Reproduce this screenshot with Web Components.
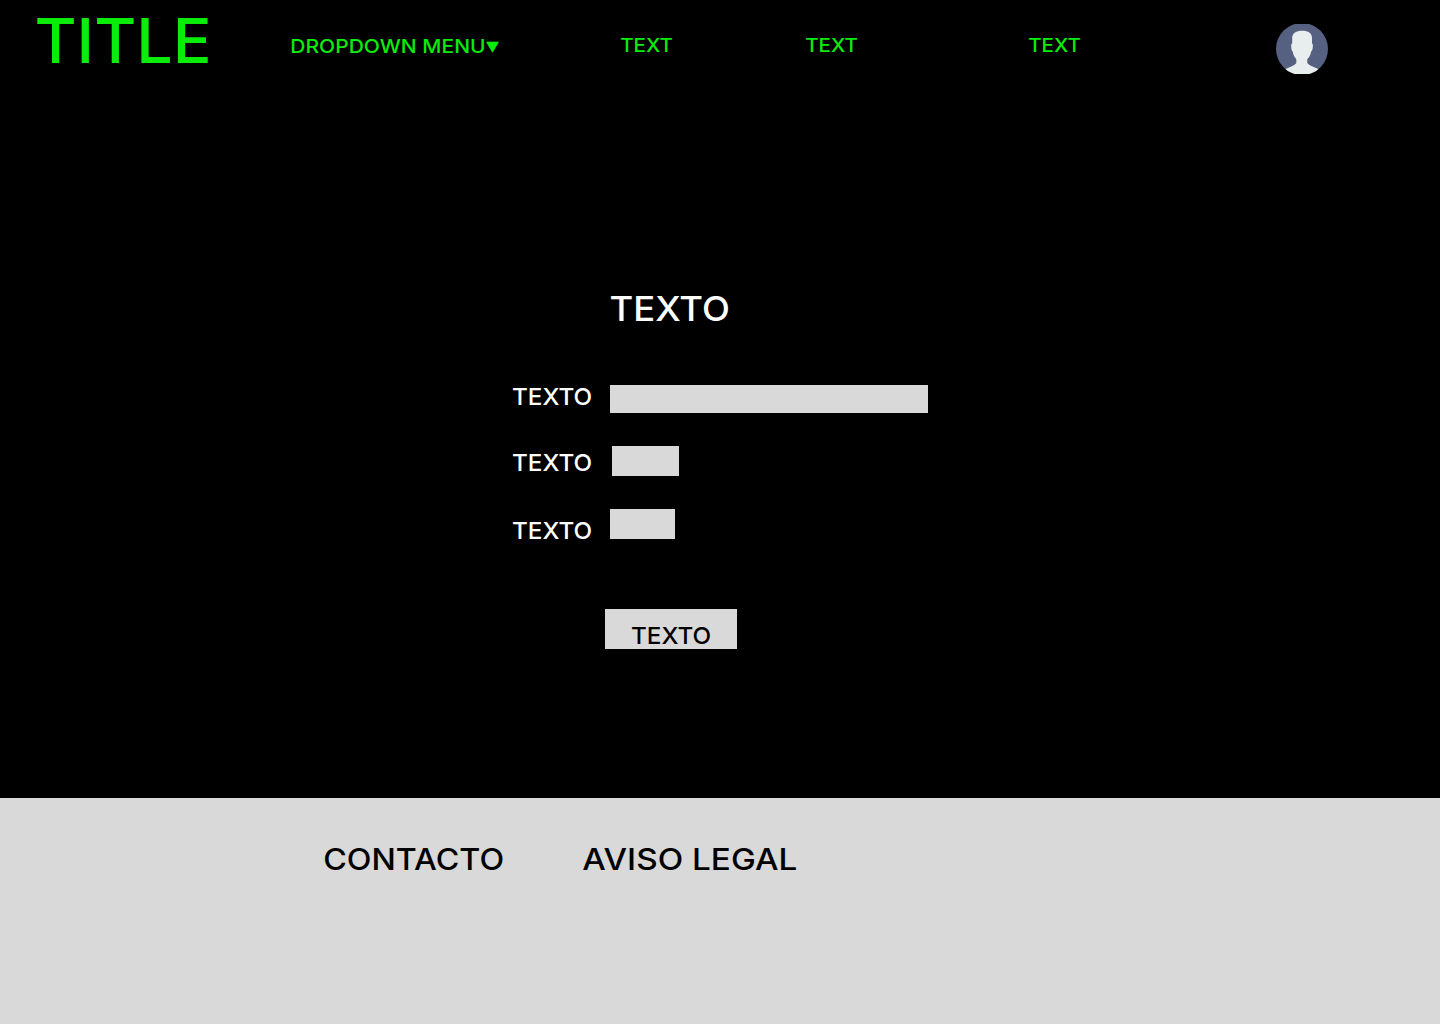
<!DOCTYPE html>
<html lang="es">
<head>
<meta charset="utf-8">
<title>Title</title>
<style>
  body { margin: 0; background: #000; font-family: Inter, "Liberation Sans", sans-serif; }
</style>
</head>
<body>
<app-page></app-page>
<script>
const define = (name, html, Base = HTMLElement) => {
  customElements.define(name, class extends Base {
    constructor() {
      super();
      this.attachShadow({ mode: 'open' }).innerHTML = html;
    }
  });
};

// A label whose box is the cap-height box of its text: w and h set its size.
class FitLabel extends HTMLElement {
  connectedCallback() {
    const w = +this.getAttribute('w'), h = +this.getAttribute('h');
    const text = this.getAttribute('text');
    const weight = this.getAttribute('weight') || 500;
    const symbol = this.hasAttribute('symbol');
    const family = symbol ? '"DejaVu Sans"' : 'Inter, "Liberation Sans", sans-serif';
    const ctx = document.createElement('canvas').getContext('2d');
    ctx.font = `${weight} 200px ${family}`;
    const m = ctx.measureText(text);
    const v = symbol ? m : ctx.measureText('H');
    const down = symbol ? v.actualBoundingBoxDescent : 0;
    const size = 200 * h / (v.actualBoundingBoxAscent + down);
    const k = size / 200;
    const sx = w / ((m.actualBoundingBoxLeft + m.actualBoundingBoxRight) * k);
    this.attachShadow({ mode: 'open' }).innerHTML = `
      <style>
        :host { display: block; flex: none; width: ${w}px; height: ${h}px; }
        svg { display: block; overflow: visible; }
        text { font: ${weight} ${size}px ${family.replace(/"/g, "'")}; fill: currentColor; }
      </style>
      <svg width="${w}" height="${h}"><text transform="scale(${sx} 1)"
        x="${m.actualBoundingBoxLeft * k}" y="${h - down * k}"></text></svg>`;
    this.shadowRoot.querySelector('text').textContent = text;
  }
}
customElements.define('fit-label', FitLabel);

define('user-avatar', `
  <style>:host { display: block; flex: none; width: 52px; height: 50px; } svg { display: block; }</style>
  <svg width="52" height="50" viewBox="0 0 52 50">
    <defs><clipPath id="c"><circle cx="26" cy="25" r="26"/></clipPath></defs>
    <g clip-path="url(#c)">
      <rect width="52" height="50" fill="#566080"/>
      <path fill="#e8eeee" d="M26 6.8C31.5 6.6 36 8.8 36 14V19.5C37.2 20 37 22.5 36.6 24.5C36.3 26.5 35.6 27.3 35.1 27.6C34.7 31 33 33.5 31.3 35.2V39C33.5 42 39 43.2 43.5 45.5L46 51H6L8.500 45.500C13 43.200 18 42 20.300 39V35.200C18.500 33.200 17.200 30.800 16.700 27.600C15.800 27 15.300 25 15.200 22.500C15.100 20.500 15.300 19.700 16.200 19.500V14C16.200 9 20.500 6.800 26 6.800Z"/>
    </g>
  </svg>`);

define('site-header', `
  <style>
    :host { display: flex; align-items: flex-start; height: 98px; padding-left: 37px; box-sizing: border-box; color: #0aec0a; }
    .brand { margin-top: 18px; }
    .menu { display: flex; align-items: flex-end; gap: 2.5px; margin: 39px 0 0 83.500px; }
    .link { margin-top: 38px; }
    user-avatar { margin: 24px 0 0 196px; }
  </style>
  <fit-label class="brand" text="TITLE" w="171" h="45"></fit-label>
  <div class="menu">
    <fit-label text="DROPDOWN MENU" w="192" h="14"></fit-label>
    <fit-label text="▼" symbol w="13" h="11" weight="400"></fit-label>
  </div>
  <fit-label class="link" style="margin-left:122px" text="TEXT" w="51" h="14"></fit-label>
  <fit-label class="link" style="margin-left:134px" text="TEXT" w="51" h="14"></fit-label>
  <fit-label class="link" style="margin-left:172px" text="TEXT" w="51" h="14"></fit-label>
  <user-avatar></user-avatar>`);

define('form-row', `
  <style>
    :host { display: flex; align-items: flex-start; }
    fit-label { margin-top: var(--drop); }
    .field { width: var(--w); height: var(--h); margin-left: var(--gap); background: #d9d9d9; }
  </style>
  <fit-label text="TEXTO" w="78" h="17"></fit-label>
  <div class="field"></div>`);

define('form-button', `
  <style>
    :host { display: flex; justify-content: center; width: 132px; height: 40px; padding-top: 18px; box-sizing: border-box; background: #d9d9d9; color: #000; }
  </style>
  <fit-label text="TEXTO" w="78" h="17"></fit-label>`);

define('entry-form', `
  <style>
    :host { display: flex; flex-direction: column; align-items: flex-start; height: 700px; padding: 198px 0 0 513px; box-sizing: border-box; color: #fff; }
    .heading { margin: 0 0 64px 98px; }
    form-button { margin: 70px 0 0 92px; }
  </style>
  <fit-label class="heading" text="TEXTO" w="117" h="25"></fit-label>
  <form-row style="--drop:3px;--gap:19px;--w:318px;--h:28px"></form-row>
  <form-row style="margin-top:33px;--drop:8px;--gap:21px;--w:67px;--h:30px"></form-row>
  <form-row style="margin-top:33px;--drop:13px;--gap:19px;--w:65px;--h:30px"></form-row>
  <form-button></form-button>`);

define('site-footer', `
  <style>
    :host { display: flex; gap: 81px; height: 226px; padding: 50px 0 0 324.5px; box-sizing: border-box; background: #d9d9d9; color: #000; }
  </style>
  <fit-label text="CONTACTO" w="177.5" h="22"></fit-label>
  <fit-label text="AVISO LEGAL" w="213" h="22"></fit-label>`);

define('app-page', `
  <style>:host { display: block; width: 1440px; height: 1024px; overflow: hidden; background: #000; }</style>
  <site-header></site-header>
  <entry-form></entry-form>
  <site-footer></site-footer>`);
</script>
</body>
</html>
